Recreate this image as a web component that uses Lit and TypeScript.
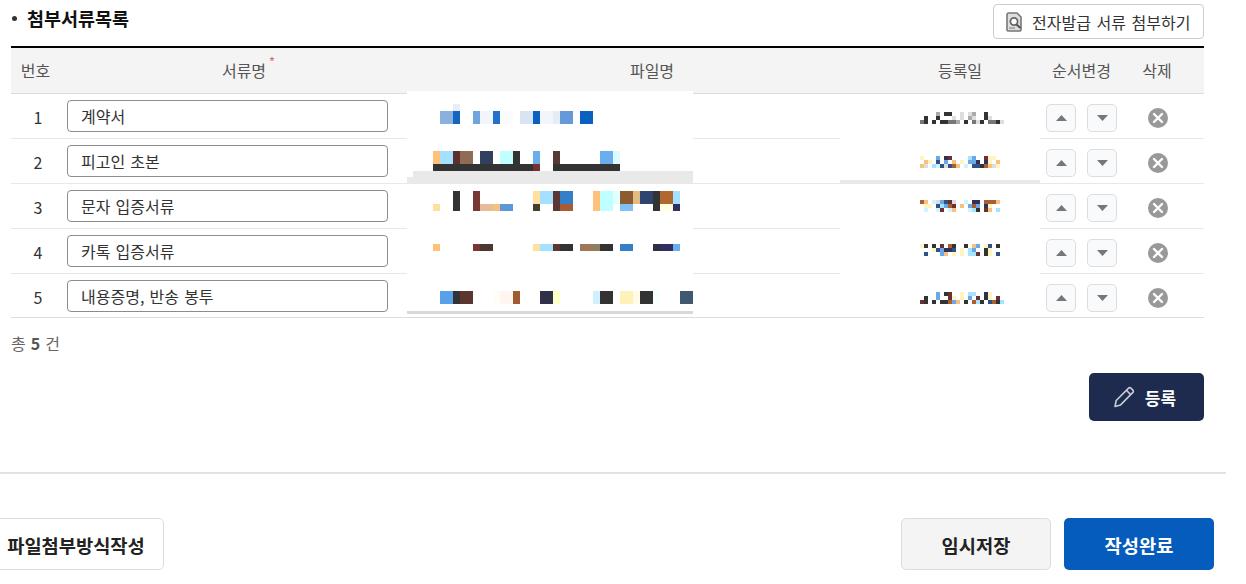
import { LitElement, html, css, svg } from "lit";
import { customElement } from "lit/decorators.js";

type Block = [number, number, number, number, string];

const W = "#ffffff";
const masks: Block[] = [
  [407, 91, 286, 80, W],
  [413, 171, 280, 6, "#e9e9e9"],
  [407, 171, 6, 6, W],
  [407, 177, 286, 6, "#e9e9e9"],
  [407, 184, 286, 133, W],
  [407, 311, 286, 3, "#d9d9d9"],
  [840, 94, 200, 86, W],
  [840, 180, 200, 3, "#e9e9e9"],
  [840, 184, 200, 133, W],
];

const fileBlocks: Block[] = [
  [453, 104, 7, 7, "#e6eefa"],
  [440, 111, 13, 13, "#8ab0e0"], [453, 111, 7, 13, "#1464c0"], [473, 111, 7, 13, "#70a4dc"], [480, 111, 13, 13, "#f2f6fb"],
  [493, 111, 7, 13, "#2272cc"], [500, 111, 13, 13, "#fafbfd"], [520, 111, 13, 13, "#d8e4f3"], [533, 111, 7, 13, "#0a60c0"],
  [540, 111, 13, 13, "#f2f6fb"], [553, 111, 7, 13, "#e4ecf8"], [560, 111, 13, 13, "#6699d8"], [580, 111, 13, 13, "#0a60c0"],

  [433, 151, 7, 13, "#ffc07a"], [440, 151, 13, 13, "#a4e0ff"], [453, 151, 7, 13, "#5c3030"], [460, 151, 13, 13, "#906c54"],
  [480, 151, 13, 13, "#30405e"], [500, 151, 13, 13, "#c0ffff"], [513, 151, 7, 13, "#333333"], [533, 151, 7, 13, "#6aaeee"],
  [553, 151, 7, 13, "#573a35"], [600, 151, 13, 13, "#6aaeee"], [613, 151, 7, 13, "#dcfaff"],
  [433, 164, 100, 7, "#333333"], [533, 164, 7, 7, "#7a3030"], [553, 164, 67, 7, "#333333"],

  [453, 191, 7, 20, "#333333"], [473, 191, 7, 20, "#7a3535"], [533, 191, 7, 13, "#ffe0a0"], [540, 191, 13, 13, "#a4e0ff"],
  [553, 191, 7, 20, "#5c3535"], [560, 191, 13, 13, "#3380c8"], [593, 191, 7, 20, "#ffc07a"], [600, 191, 13, 20, "#c0ffff"],
  [613, 191, 7, 13, "#e0ffff"], [620, 191, 13, 13, "#8c5c30"], [633, 191, 7, 13, "#e0bc80"], [640, 191, 13, 13, "#304470"],
  [653, 191, 7, 20, "#333333"], [660, 191, 13, 13, "#b06830"], [673, 191, 7, 13, "#a4e0ff"],
  [433, 204, 7, 7, "#ffe0a0"], [480, 204, 13, 7, "#e8bc98"], [493, 204, 7, 7, "#f5c080"], [500, 204, 13, 7, "#5c98d8"],
  [533, 204, 7, 7, "#443c2c"], [560, 204, 13, 7, "#a85c34"], [620, 204, 13, 7, "#80c0f5"], [660, 204, 13, 7, "#fffee0"], [673, 204, 7, 7, "#303060"],

  [433, 244, 7, 7, "#ffc07a"], [473, 244, 7, 7, "#7a3535"], [480, 244, 13, 7, "#4c3830"], [533, 244, 7, 7, "#ffe0a0"],
  [540, 244, 13, 7, "#a4e0ff"], [553, 244, 7, 7, "#5c3535"], [560, 244, 13, 7, "#333333"], [580, 244, 13, 7, "#9c7858"],
  [593, 244, 7, 7, "#8c8060"], [600, 244, 13, 7, "#333333"], [620, 244, 13, 7, "#3380c8"], [653, 244, 7, 7, "#303040"],
  [660, 244, 13, 7, "#303060"], [673, 244, 7, 7, "#6aaeee"],

  [440, 291, 13, 13, "#58a0e8"], [453, 291, 7, 13, "#333333"], [460, 291, 13, 13, "#5c3530"], [493, 291, 7, 13, "#fffdf8"],
  [500, 291, 13, 13, "#fff6f0"], [513, 291, 7, 13, "#a05c30"], [540, 291, 13, 13, "#303048"], [553, 291, 7, 13, "#ffffc8"],
  [593, 291, 7, 13, "#d0f0ff"], [600, 291, 13, 13, "#333333"], [620, 291, 13, 13, "#fff2b8"], [633, 291, 7, 13, "#fffbe6"],
  [640, 291, 13, 13, "#333333"], [653, 291, 7, 13, "#f8ffff"], [680, 291, 13, 13, "#405870"],
];

const palette: Record<string, string> = {
  d: "#333333", g: "#777777", m: "#aaaaaa", l: "#dddddd",
  o: "#f5c080", y: "#fff3c0", c: "#a4e4ff", s: "#6aa8e8", n: "#30508c", r: "#6b3030", t: "#a86030", w: "#d0f4ff", p: "#303058",
};

const dateGrids: [number, string[]][] = [
  [112, ["....m.dd..l.lm..d....", ".d..d...l.l.ml..dl...", "gd.d.ddggm.d.gld.ggdl"]],
  [156, ["y...s.pr....cs..ryy..", ".oy.n.s.o.y.ssp.py.o.", "ol.cwnlnto.w.nndtoly."]],
  [200, ["to.wlsnrl..w.pp.ttto.", ".yy.ncstr.o.sts.py...", ".w..wr.wo...wcd.ro.c."]],
  [244, ["yd.d.r.td..d.os.yn.d.", "...ynsppn.y.cs..dy...", ".n...so.y.y.ccr.dy.n."]],
  [292, ["....s.dr..y.cc..py...", ".d..s..ry.y.s.r.dy.r.", "rd.d.ddtso.d.tcd.ntdc"]],
];

const dateBlocks: Block[] = dateGrids.flatMap(([top, rows]) =>
  rows.flatMap((row, r) =>
    [...row].flatMap((ch, i): Block[] => (palette[ch] ? [[920 + i * 4, top + r * 4, 4, 4, palette[ch]]] : [])),
  ),
);

const docs = ["계약서", "피고인 초본", "문자 입증서류", "카톡 입증서류", "내용증명, 반송 봉투"];

@customElement("app-root")
export class AppRoot extends LitElement {
  static styles = css`
    :host {
      display: block;
      position: relative;
      width: 1246px;
      height: 584px;
      overflow: hidden;
      background: #fff;
      font-family: "Noto Sans CJK KR", "Noto Sans", sans-serif;
      color: #333;
    }
    .section { padding: 4px 42px 0 11px; }
    .title-row { display: flex; justify-content: space-between; align-items: flex-start; height: 42px; }
    .title { display: flex; align-items: center; gap: 10px; height: 30px; margin-top: -1px; font-size: 18.5px; font-weight: 700; color: #111; line-height: 30px; }
    .title::before { content: ""; width: 5px; height: 5px; border-radius: 50%; background: #333; margin-left: 1px; }
    .issue { display: flex; align-items: center; gap: 9px; box-sizing: border-box; width: 211px; height: 35px; padding-left: 11px; border: 1px solid #ccc; border-radius: 4px; font-size: 16px; color: #333; white-space: nowrap; word-spacing: 2px; }
    .table { border-top: 2px solid #000; }
    .grid { display: grid; grid-template-columns: 49px 368px 452px 160px 83px 81px; }
    .head { height: 46px; box-sizing: border-box; background: #f4f4f4; border-bottom: 1px solid #ddd; font-size: 16px; color: #555; align-items: center; text-align: center; line-height: 45px; }
    .head > div:nth-child(3) { padding-right: 4px; }
    .head > div:last-child { padding-right: 13px; }
    .req { position: relative; }
    .req i { position: absolute; right: -9px; top: -3px; font-style: normal; font-size: 13px; line-height: 14px; color: #e8606c; }
    .row { height: 45px; box-sizing: border-box; border-bottom: 1px solid #e8e8e8; align-items: start; }
    .row:last-child { height: 44px; border-bottom-color: #ddd; }
    .cell { height: 44px; display: flex; align-items: center; justify-content: center; }
    .num { font-size: 16px; color: #333; padding: 2px 0 0 5px; box-sizing: border-box; }
    .name { justify-content: flex-start; padding-left: 7px; }
    .field { box-sizing: border-box; width: 321px; height: 32px; padding-left: 13px; border: 1px solid #8c8c8c; border-radius: 4px; font-size: 16px; line-height: 30px; color: #333; word-spacing: 1.6px; }
    .order { gap: 11px; padding-top: 4px; box-sizing: border-box; }
    .arrow { display: flex; align-items: center; justify-content: center; width: 30px; height: 28px; box-sizing: border-box; border: 1px solid #ddd; border-radius: 5px; background: #f9fafb; }
    .arrow svg { display: block; }
    .del { padding-right: 11px; box-sizing: border-box; padding-top: 3px; }
    .foot-count { margin-top: 14px; height: 22px; font-size: 16px; line-height: 22px; color: #666; word-spacing: 1.5px; }
    .foot-count b { color: #555; }
    .actions { display: flex; justify-content: flex-end; margin-top: 19px; }
    .submit { display: flex; align-items: center; justify-content: center; gap: 10px; box-sizing: border-box; width: 115px; height: 48px; padding-right: 4px; border-radius: 5px; background: #1e2a4e; color: #fff; font-size: 17px; font-weight: 700; }
    .rule { margin-top: 51px; width: 1226px; height: 2px; background: #e2e2e2; }
    .footer { display: flex; align-items: center; margin-top: 44px; padding-right: 32px; }
    .btn { display: flex; align-items: center; justify-content: center; box-sizing: border-box; height: 52px; border-radius: 5px; font-size: 18.7px; font-weight: 700; color: #222; white-space: nowrap; }
    .method { width: 180px; margin-left: -16px; padding-left: 4px; border: 1px solid #ddd; background: #fff; }
    .spacer { flex: 1; }
    .temp { width: 150px; border: 1px solid #ddd; background: #f4f4f4; }
    .done { width: 150px; margin-left: 13px; background: #055cbc; color: #fff; }
    .censor { position: absolute; inset: 0; pointer-events: none; }
    .censor div { position: absolute; }
  `;

  private blocks(list: Block[]) {
    return list.map(
      ([x, y, w, h, c]) => html`<div style="left:${x}px;top:${y}px;width:${w}px;height:${h}px;background:${c}"></div>`,
    );
  }

  private docIcon() {
    return html`<svg width="18" height="20" viewBox="0 0 18 20" fill="none">
      <path d="M4 1h8l4 4v13a1 1 0 0 1-1 1H3a1 1 0 0 1-1-1V3a2 2 0 0 1 2-2z" fill="#dedede" stroke="#777" stroke-width="1.6"/>
      <circle cx="9" cy="9.5" r="3.6" fill="#fff" stroke="#666" stroke-width="1.8"/>
      <path d="M11.5 12.5l4 3.5" stroke="#555" stroke-width="2"/>
      <path d="M4 16h6" stroke="#999" stroke-width="1.4"/>
    </svg>`;
  }

  private tri(up: boolean) {
    const d = up ? "M0 6 L5.5 0 L11 6 Z" : "M0 0 L11 0 L5.5 6 Z";
    return html`<svg width="11" height="6" viewBox="0 0 11 6">${svg`<path d=${d} fill="#777"></path>`}</svg>`;
  }

  private close() {
    return html`<svg width="20" height="20" viewBox="0 0 20 20">
      <circle cx="10" cy="10" r="10" fill="#999"/>
      <path d="M6 6l8 8M14 6l-8 8" stroke="#fff" stroke-width="2.4" stroke-linecap="round"/>
    </svg>`;
  }

  private pencil() {
    return html`<svg width="22" height="22" viewBox="0 0 22 22" fill="none" stroke="#c9ccd4" stroke-width="1.6" stroke-linejoin="round">
      <path d="M2 20.5l1.2-6L15.6 2.1a1.6 1.6 0 0 1 2.3 0l2 2a1.6 1.6 0 0 1 0 2.3L7.6 18.9z"/>
      <path d="M13.4 4.3l4.3 4.3"/>
    </svg>`;
  }

  render() {
    return html`
      <div class="section">
        <div class="title-row">
          <div class="title">첨부서류목록</div>
          <div class="issue">${this.docIcon()}<span>전자발급 서류 첨부하기</span></div>
        </div>
        <div class="table">
          <div class="grid head">
            <div>번호</div>
            <div><span class="req">서류명<i>*</i></span></div>
            <div>파일명</div>
            <div>등록일</div>
            <div>순서변경</div>
            <div>삭제</div>
          </div>
          ${docs.map(
            (d, i) => html`<div class="grid row">
              <div class="cell num">${i + 1}</div>
              <div class="cell name"><div class="field">${d}</div></div>
              <div class="cell"></div>
              <div class="cell"></div>
              <div class="cell order">
                <div class="arrow">${this.tri(true)}</div>
                <div class="arrow">${this.tri(false)}</div>
              </div>
              <div class="cell del">${this.close()}</div>
            </div>`,
          )}
        </div>
        <div class="foot-count">총 <b>5</b> 건</div>
        <div class="actions">
          <div class="submit">${this.pencil()}<span>등록</span></div>
        </div>
      </div>
      <div class="rule"></div>
      <div class="footer">
        <div class="btn method">파일첨부방식작성</div>
        <div class="spacer"></div>
        <div class="btn temp">임시저장</div>
        <div class="btn done">작성완료</div>
      </div>
      <div class="censor">
        ${this.blocks(masks)} ${this.blocks(fileBlocks)} ${this.blocks(dateBlocks)}
      </div>
    `;
  }
}
